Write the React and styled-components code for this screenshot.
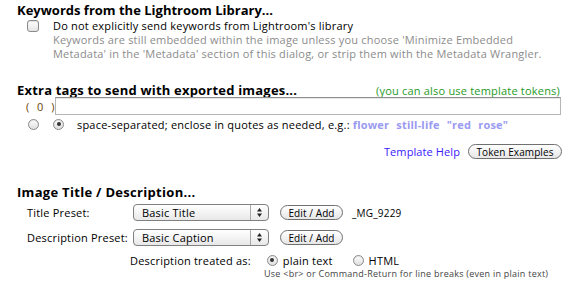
import React from "react";
import styled, { createGlobalStyle, css } from "styled-components";

const GlobalStyle = createGlobalStyle`
  html, body { margin: 0; padding: 0; background: #fff; }
  body {
    font-family: "Open Sans", "DejaVu Sans", sans-serif;
    font-size: 11px;
    letter-spacing: 0.2px;
    color: #000;
    width: 570px;
    height: 284px;
    overflow: hidden;
  }
`;

const Page = styled.div`
  box-sizing: border-box;
  width: 570px;
  padding: 3px 8px 0 17px;
  display: flex;
  flex-direction: column;
`;

const Heading = styled.div`
  font-weight: 700;
  font-size: 13px;
  letter-spacing: ${(p) => p.$ls ?? 0.1}px;
  line-height: 14px;
  height: 14px;
  margin-top: ${(p) => p.$mt || 0}px;
  white-space: nowrap;
`;

const HeadingRow = styled.div`
  display: flex;
  justify-content: space-between;
  align-items: center;
  margin-top: ${(p) => p.$mt || 0}px;
  height: 14px;
  padding-right: 2px;
`;

const Hint = styled.span`
  color: #1f9a1f;
  font-size: 11px;
`;

const CheckRow = styled.div`
  display: flex;
  align-items: center;
  height: 12px;
  margin-top: 3px;
  padding-left: 10px;
  gap: 14px;
  line-height: 12px;
  white-space: nowrap;
`;

const Checkbox = styled.span`
  box-sizing: border-box;
  width: 12px;
  height: 12px;
  border: 1px solid #8a8a8a;
  border-radius: 3px;
  background: linear-gradient(#ffffff, #e4e4e4);
  box-shadow: inset 0 1px 1px rgba(0, 0, 0, 0.12);
  flex: none;
`;

const Note = styled.div`
  padding-left: 36px;
  margin-top: 1px;
  color: #8c8c8c;
  line-height: 14px;
  white-space: nowrap;
`;

const InputRow = styled.div`
  display: flex;
  align-items: center;
  height: 18px;
  padding-left: 9px;
  gap: 3px;
`;

const Count = styled.span`
  color: #6b4200;
  width: 26px;
  white-space: nowrap;
  letter-spacing: 0.5px;
  word-spacing: 4px;
`;

const TextField = styled.div`
  box-sizing: border-box;
  width: 506px;
  height: 18px;
  border: 1px solid #b5b5b5;
  border-top-color: #8e8e8e;
  box-shadow: inset 0 1px 1px rgba(0, 0, 0, 0.1);
  background: #fff;
`;

const RadioRow = styled.div`
  display: flex;
  align-items: center;
  height: 12px;
  margin-top: ${(p) => p.$mt || 0}px;
  padding-left: ${(p) => p.$pl || 0}px;
  white-space: nowrap;
`;

const Radio = styled.span`
  box-sizing: border-box;
  position: relative;
  width: 11px;
  height: 11px;
  border-radius: 50%;
  border: 1px solid #8a8a8a;
  background: linear-gradient(#ffffff, #dedede);
  box-shadow: inset 0 1px 1px rgba(0, 0, 0, 0.1);
  flex: none;
  margin-right: ${(p) => p.$mr || 0}px;
  margin-left: ${(p) => p.$ml || 0}px;
  ${(p) =>
    p.$on &&
    css`
      &::after {
        content: "";
        position: absolute;
        left: 2.5px;
        top: 2.5px;
        width: 4px;
        height: 4px;
        border-radius: 50%;
        background: #333;
      }
    `}
`;

const Tokens = styled.span`
  color: #9a9af0;
  font-weight: 700;
  margin-left: 3px;
  word-spacing: 4px;
`;

const HelpRow = styled.div`
  display: flex;
  justify-content: flex-end;
  align-items: center;
  gap: 8px;
  height: 15px;
  margin-top: 14px;
`;

const Link = styled.span`
  color: #3a20ff;
  font-size: 11px;
  letter-spacing: 0.1px;
`;

const PillButton = styled.span`
  box-sizing: border-box;
  display: inline-flex;
  align-items: center;
  justify-content: center;
  width: ${(p) => p.$w}px;
  height: ${(p) => p.$h || 15}px;
  border: 1px solid #707070;
  border-radius: 8px;
  background: linear-gradient(#ffffff, #e6e6e6);
  font-size: 10px;
  letter-spacing: 0.1px;
  flex: none;
  white-space: nowrap;
`;

const PresetRow = styled.div`
  display: flex;
  align-items: center;
  height: 17px;
  margin-top: ${(p) => p.$mt || 0}px;
  padding-left: 10px;
  white-space: nowrap;
`;

const Label = styled.span`
  width: 106px;
  flex: none;
`;

const Popup = styled.span`
  box-sizing: border-box;
  display: flex;
  align-items: stretch;
  width: 136px;
  height: 17px;
  border: 1px solid #808080;
  border-radius: 4px;
  background: linear-gradient(#ffffff, #e8e8e8);
  margin-right: 11px;
  flex: none;
  overflow: hidden;
`;

const PopupText = styled.span`
  flex: 1;
  padding-left: 8px;
  display: flex;
  align-items: center;
  font-size: 11px;
`;

const PopupArrows = styled.span`
  width: 17px;
  border-left: 1px solid #a8a8a8;
  display: flex;
  align-items: center;
  justify-content: center;
`;

const Filename = styled.span`
  margin-left: 9px;
  font-size: 10px;
`;

const SmallNote = styled.div`
  padding-left: 247px;
  margin-top: 3px;
  font-size: 9px;
  letter-spacing: 0.25px;
  line-height: 10px;
  color: #444;
  white-space: nowrap;
`;

const Arrows = () => (
  <svg width="7" height="11" viewBox="0 0 7 11">
    <path d="M3.5 1 L6 4.5 L1 4.5 Z" fill="#222" />
    <path d="M3.5 10 L6 6.5 L1 6.5 Z" fill="#222" />
  </svg>
);

export default function App() {
  return (
    <>
      <GlobalStyle />
      <Page>
        <Heading $mt={0} $ls={0}>Keywords from the Lightroom Library...</Heading>
        <CheckRow>
          <Checkbox />
          <span>Do not explicitly send keywords from Lightroom's library</span>
        </CheckRow>
        <Note>
          Keywords are still embedded within the image unless you choose 'Minimize Embedded
          <br />
          Metadata' in the 'Metadata' section of this dialog, or strip them with the Metadata Wrangler.
        </Note>

        <HeadingRow $mt={22}>
          <Heading $ls={0.2}>Extra tags to send with exported images...</Heading>
          <Hint>(you can also use template tokens)</Hint>
        </HeadingRow>
        <InputRow>
          <Count>( 0 )</Count>
          <TextField />
        </InputRow>
        <RadioRow $mt={3} $pl={11}>
          <Radio $mr={14} />
          <Radio $on $mr={13} />
          <span>space-separated; enclose in quotes as needed, e.g.:</span>
          <Tokens>flower still-life "red rose"</Tokens>
        </RadioRow>
        <HelpRow>
          <Link>Template Help</Link>
          <PillButton $w={94}>Token Examples</PillButton>
        </HelpRow>

        <Heading $mt={26} $ls={0.3}>Image Title / Description...</Heading>
        <PresetRow $mt={5}>
          <Label>Title Preset:</Label>
          <Popup>
            <PopupText>Basic Title</PopupText>
            <PopupArrows>
              <Arrows />
            </PopupArrows>
          </Popup>
          <PillButton $w={63}>Edit / Add</PillButton>
          <Filename>_MG_9229</Filename>
        </PresetRow>
        <PresetRow $mt={8}>
          <Label>Description Preset:</Label>
          <Popup>
            <PopupText>Basic Caption</PopupText>
            <PopupArrows>
              <Arrows />
            </PopupArrows>
          </Popup>
          <PillButton $w={63}>Edit / Add</PillButton>
        </PresetRow>
        <RadioRow $mt={8} $pl={113}>
          <span>Description treated as:</span>
          <Radio $on $ml={16} $mr={5} />
          <span>plain text</span>
          <Radio $ml={20} $mr={5} />
          <span>HTML</span>
        </RadioRow>
        <SmallNote>Use &lt;br&gt; or Command-Return for line breaks (even in plain text)</SmallNote>
      </Page>
    </>
  );
}
